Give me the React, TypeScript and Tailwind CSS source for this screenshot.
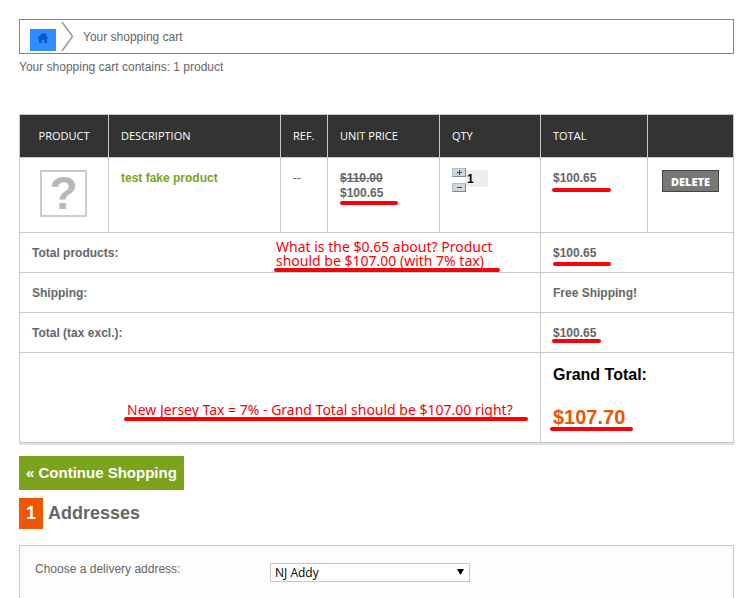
import React from "react";
import clsx from "clsx";

const headings = [
  "PRODUCT",
  "DESCRIPTION",
  "REF.",
  "UNIT PRICE",
  "QTY",
  "TOTAL",
  "",
];

const border = "border border-[#c8c8c8]";
const cell = "border border-[#c8c8c8] px-3 pt-[13px] pb-[11px] text-left align-top";

interface MarkProps {
  className: string;
}

// Red pen stroke drawn under a value
function Mark({ className }: MarkProps) {
  return (
    <span
      aria-hidden="true"
      className={clsx("absolute h-1 rounded-full bg-[#fb0007]", className)}
    />
  );
}

interface SummaryRowProps {
  label: string;
  value: string;
  note?: React.ReactNode;
  mark?: string;
}

function SummaryRow({ label, value, note, mark }: SummaryRowProps) {
  return (
    <tr className="font-bold">
      <th scope="row" colSpan={5} className={cell}>
        <div className="relative">
          {label}
          {note}
        </div>
      </th>
      <td colSpan={2} className={cell}>
        <div className="relative">
          {value}
          {mark && <Mark className={mark} />}
        </div>
      </td>
    </tr>
  );
}

function Breadcrumb() {
  return (
    <nav
      aria-label="Breadcrumb"
      className="flex h-[35px] items-center border border-[#76a21e] pl-[10px]"
    >
      <a
        href="#home"
        aria-label="Home"
        className="mt-[7px] flex h-[22px] w-[26px] items-center justify-center bg-[#308dff]"
      >
        <svg width="12" height="12" viewBox="0 0 12 12" className="-mt-[5px]">
          <path
            d="M6 0.5L8 2.4V1.4H9.5V3.9L11.4 5.8V6.6H10V11H7.2V8H4.8V11H2V6.6H0.6V5.8Z"
            fill="#0759c4"
          />
        </svg>
      </a>
      <svg
        width="13"
        height="31"
        viewBox="0 0 13 31"
        className="ml-[5px]"
        fill="none"
        stroke="#999"
        strokeWidth="1.5"
      >
        <path d="M1 1L11.5 15.5L1 30" />
      </svg>
      <span className="mt-[2px] ml-[9px]">Your shopping cart</span>
    </nav>
  );
}

function QtyButton({ label, plus }: { label: string; plus?: boolean }) {
  return (
    <button
      type="button"
      aria-label={label}
      className="flex h-[9px] w-[14px] items-center justify-center border border-[#7d8893] border-t-[#b3bdc7] border-l-[#b3bdc7] bg-[#cbd6df]"
    >
      <svg width="5" height="5" viewBox="0 0 5 5" shapeRendering="crispEdges">
        <path d={plus ? "M0 2H5V3H0ZM2 0H3V5H2Z" : "M0 2H5V3H0Z"} fill="#444" />
      </svg>
    </button>
  );
}

function CartTable() {
  return (
    <table className="mt-[39px] w-full table-fixed border-collapse shadow-[0_2px_0_#e0e0e0]">
      <colgroup>
        <col className="w-[89px]" />
        <col />
        <col className="w-[47px]" />
        <col className="w-[112px]" />
        <col className="w-[101px]" />
        <col className="w-[107px]" />
        <col className="w-[86px]" />
      </colgroup>
      <thead>
        <tr className="h-[43px] bg-[#333] font-['Open_Sans',sans-serif] text-[11px] text-white">
          {headings.map((heading, i) => (
            <th
              key={i}
              scope="col"
              className={clsx(
                border,
                "pb-[2px] font-medium whitespace-nowrap",
                i === 0 ? "text-center" : "px-3 text-left"
              )}
            >
              {heading}
            </th>
          ))}
        </tr>
      </thead>
      <tbody>
        <tr className="h-[75px] font-bold">
          <td className={clsx(border, "px-3 pt-3 align-top")}>
            <div
              role="img"
              aria-label="No product picture"
              className="ml-2 flex h-[47px] w-[47px] items-center justify-center border-2 border-[#ccc] text-[46px] text-[#b8b8b8]"
            >
              ?
            </div>
          </td>
          <td className={cell}>
            <a href="#product" className="text-[#7ba31c]">
              test fake product
            </a>
          </td>
          <td className={clsx(cell, "font-normal")}>--</td>
          <td className={cell}>
            <div className="relative">
              <del className="block">$110.00</del>
              $100.65
              <Mark className="top-[30px] left-0 w-[58px]" />
            </div>
          </td>
          <td className={clsx(border, "px-3 pt-[10px] align-top")}>
            <div className="flex">
              <div className="flex flex-col gap-[6px]">
                <QtyButton label="Add one" plus />
                <QtyButton label="Remove one" />
              </div>
              <input
                type="text"
                aria-label="Quantity"
                defaultValue="1"
                className="mt-[2px] h-[17px] w-[22px] bg-[#eee] pl-[1px] text-black"
              />
            </div>
          </td>
          <td className={cell}>
            <div className="relative">
              $100.65
              <Mark className="top-[17px] -left-px w-[59px]" />
            </div>
          </td>
          <td className={clsx(border, "pt-3 text-center align-top")}>
            <button
              type="button"
              className="h-[22px] w-[57px] border border-[#444] bg-[#777] font-['Open_Sans',sans-serif] text-[11px] font-extrabold text-white"
            >
              DELETE
            </button>
          </td>
        </tr>
        <SummaryRow
          label="Total products:"
          value="$100.65"
          mark="top-4 left-0 w-[58px]"
          note={
            <p className="absolute -top-[6px] left-[244px] font-['Noto_Sans',sans-serif] text-sm leading-[14px] font-normal whitespace-nowrap text-[#fb0007]">
              What is the $0.65 about? Product
              <br />
              should be $107.00 (with 7% tax)
              <Mark className="top-[28px] -left-[2px] w-[226px]" />
            </p>
          }
        />
        <SummaryRow label="Shipping:" value="Free Shipping!" />
        <SummaryRow
          label="Total (tax excl.):"
          value="$100.65"
          mark="top-[13px] -left-px w-[49px]"
        />
        <tr className="h-[90px] font-bold">
          <td colSpan={5} className={cell}>
            <div className="relative">
              <p className="absolute top-[34px] left-[95px] font-['Noto_Sans',sans-serif] text-sm font-normal whitespace-nowrap text-[#fb0007]">
                New Jersey Tax = 7% - Grand Total should be $107.00 right?
                <Mark className="top-[17px] -left-[3px] w-[404px]" />
              </p>
            </div>
          </td>
          <td colSpan={2} className={clsx(border, "px-3 pt-3 align-top")}>
            <div className="text-base leading-5 text-black">Grand Total:</div>
            <div className="relative mt-5 text-xl leading-6 text-[#ec5500]">
              $107.70
              <Mark className="top-[22px] -left-[3px] w-[83px]" />
            </div>
          </td>
        </tr>
      </tbody>
    </table>
  );
}

export default function App() {
  return (
    <main className="bg-white pt-[19px] pr-3 pl-[19px] font-['Liberation_Sans',Arial,sans-serif] text-xs leading-[15px] text-[#666]">
      <Breadcrumb />
      <p className="mt-[6px]">Your shopping cart contains: 1 product</p>

      <CartTable />

      <a
        href="#shop"
        className="mt-[13px] inline-block bg-[#7ba31c] px-[7px] text-[15px] leading-[34px] font-bold text-white"
      >
        « Continue Shopping
      </a>

      <h2 className="mt-2 flex items-center gap-[5px] text-lg leading-[31px] font-bold">
        <span className="w-6 bg-[#f05500] text-center text-white">1</span>
        Addresses
      </h2>

      <section className="mt-4 flex border border-b-0 border-[#c8c8c8] bg-[#fdfdfd] px-[15px] pt-4 pb-4">
        <label htmlFor="delivery" className="w-[235px]">
          Choose a delivery address:
        </label>
        <div className="relative mt-px h-[19px] w-[200px]">
          <select
            id="delivery"
            className="h-full w-full appearance-none border border-[#c8c8c8] bg-white pl-1 font-['Open_Sans',sans-serif] text-xs leading-[15px] text-black"
          >
            <option>NJ Addy</option>
          </select>
          <svg
            width="7"
            height="6"
            viewBox="0 0 7 6"
            className="pointer-events-none absolute top-[6px] right-[6px]"
          >
            <path d="M0 0H7L3.5 6Z" fill="#000" />
          </svg>
        </div>
      </section>
    </main>
  );
}
